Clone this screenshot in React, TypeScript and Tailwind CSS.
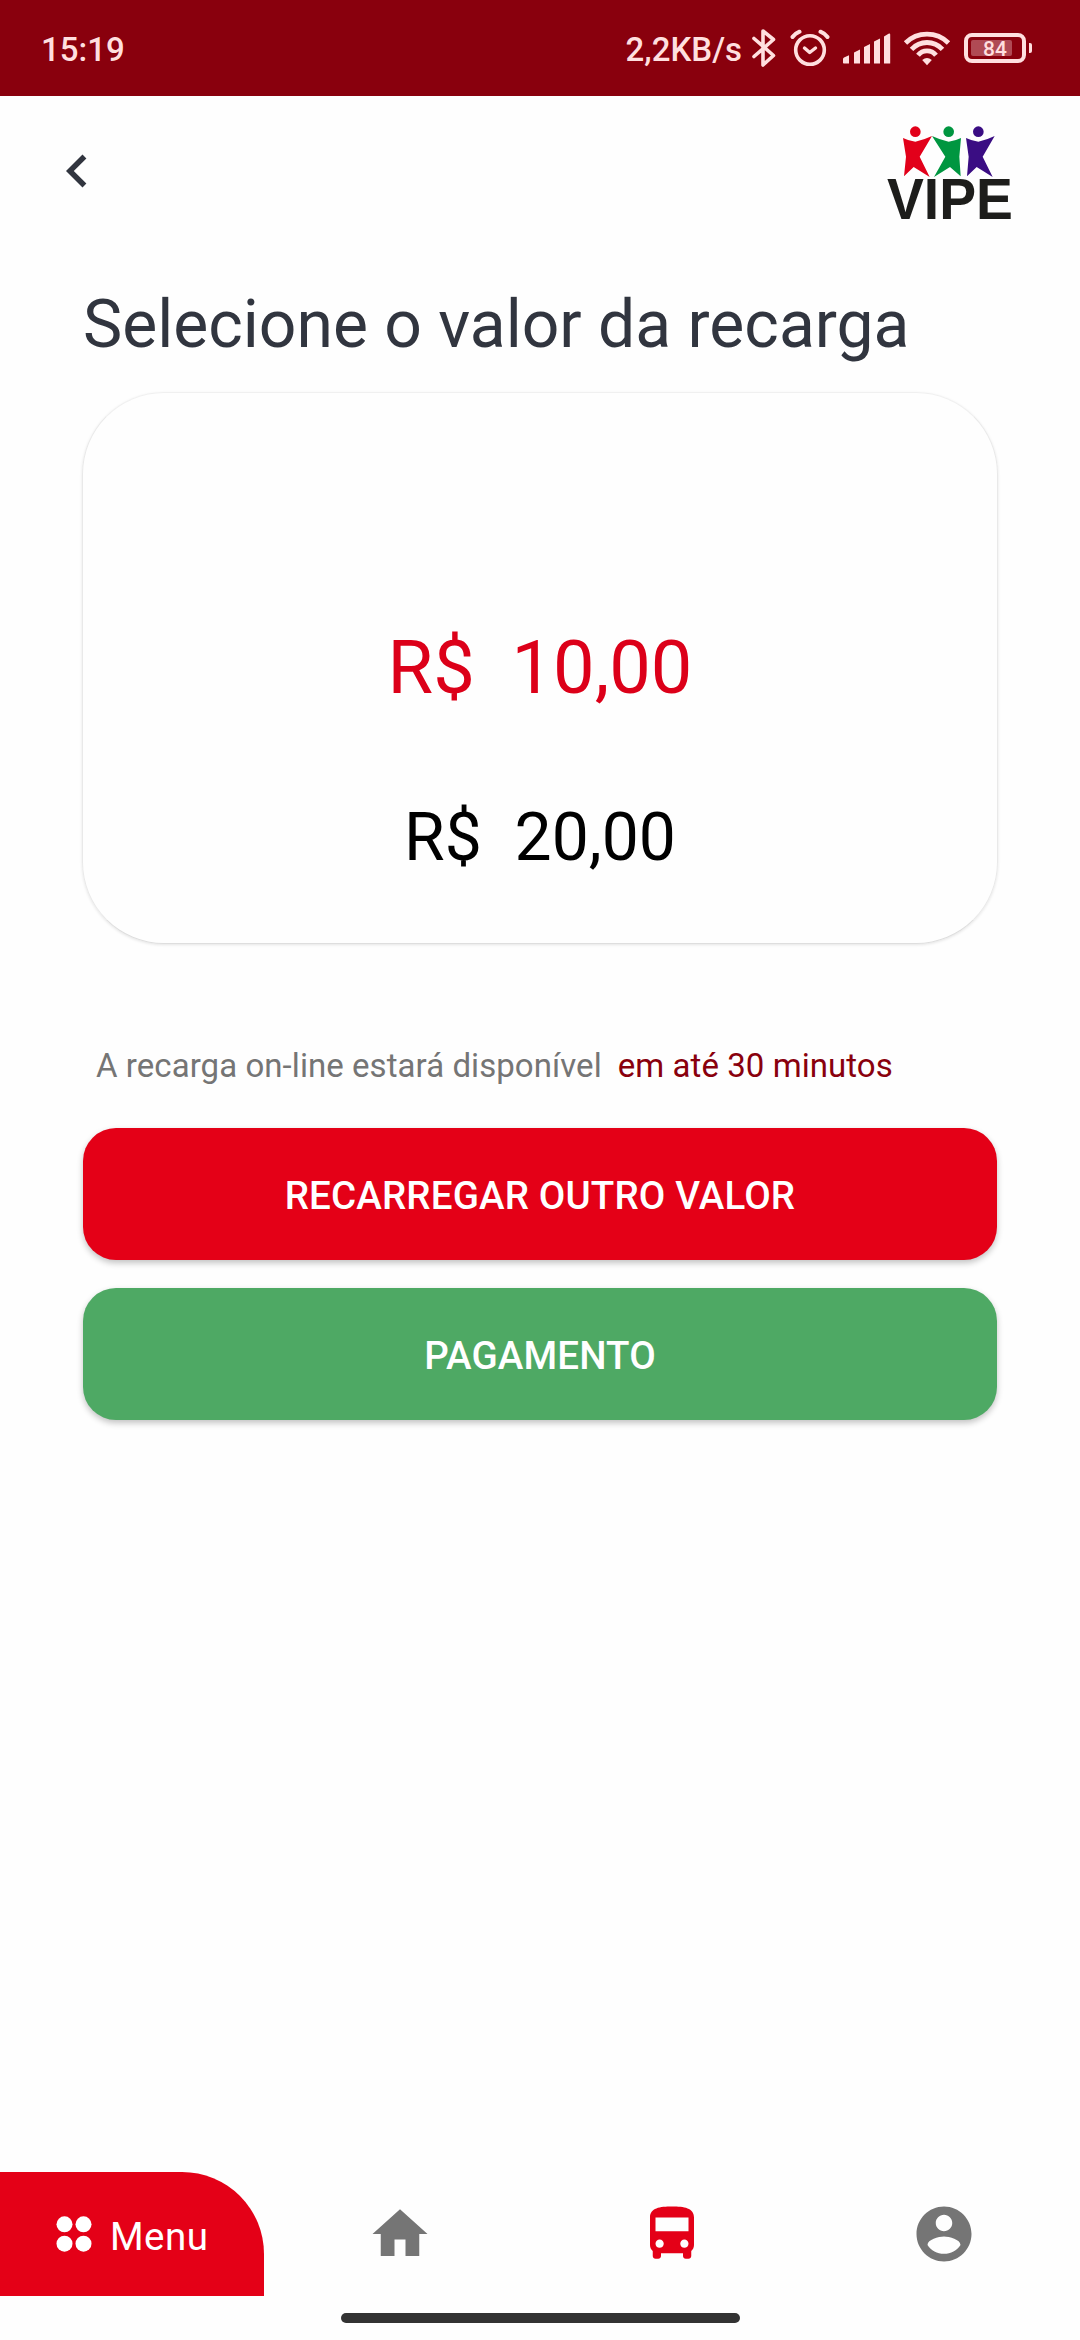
import { MdChevronLeft, MdDirectionsBus } from "react-icons/md";

const values = [
  { label: "10,00", selected: true },
  { label: "20,00", selected: false },
];

function StatusBar() {
  return (
    <div className="flex h-24 items-center bg-[#89000d] pl-[41px] pr-[48px] text-[33px] font-medium leading-none text-[#ffdfdf]">
      <span className="pt-[2px]">15:19</span>
      <div className="ml-auto flex items-center">
        <span className="pt-[2px]">2,2KB/s</span>
        {/* Bluetooth */}
        <svg className="ml-[9px]" width="26" height="40" viewBox="0 0 26 40" fill="none" stroke="currentColor" strokeWidth="3.6" strokeLinecap="round" strokeLinejoin="round">
          <path d="M3 10.5L22.5 27.5L12 37V3L22.5 11.5L3 28.5" />
        </svg>
        {/* Alarm */}
        <svg className="ml-[13px]" width="40" height="38" viewBox="0 0 40 38" fill="none" stroke="currentColor" strokeLinecap="round" strokeLinejoin="round">
          <circle cx="20" cy="21" r="14.3" strokeWidth="3.6" />
          <path d="M14.5 19L19.7 23.5L25.5 19" strokeWidth="3.4" />
          <path d="M2.5 8Q5 4.5 9.5 2.7M30.5 2.7Q35 4.5 37.5 8" strokeWidth="4" />
        </svg>
        {/* Signal */}
        <svg className="ml-[12px]" width="50" height="32" viewBox="0 0 50 32" fill="currentColor">
          <path d="M1 27q0-1 1-1.5l5-2.3v8.3H1.8q-.8 0-.8-.8zM12 20.5l6-3v14h-6zM22 15l6-3v19.5h-6zM32 9.5l6-3v25h-6zM42 4.5l4.5-2.7q1.7-.8 1.7.8v28.9H42z" />
        </svg>
        {/* Wi-Fi */}
        <svg className="ml-[11px]" width="48" height="36" viewBox="0 0 48 36" fill="none" stroke="currentColor" strokeWidth="4.8">
          <path d="M2.5 13Q11.500 4.200 24 4.200T45.500 13" />
          <path d="M8.500 19.300Q15 12.500 24 12.500T39.500 19.300" />
          <path d="M15 25.200Q18.500 20.800 24 20.800T33 25.200" />
          <path d="M19.200 30Q24 26.200 28.800 30L24 35.200z" fill="currentColor" stroke="none" />
        </svg>
        {/* Battery */}
        <div className="ml-[13px] flex items-center gap-[3px]">
          <div className="relative flex h-[30px] w-[62px] items-center justify-center rounded-[8px] border-4 border-[#ffdfdf]">
            <div className="absolute left-[3px] top-[3px] h-4 w-[41px] rounded-[2px] bg-[#b04a54]" />
            <span className="relative pt-[2px] text-[21px]">84</span>
          </div>
          <div className="h-[10px] w-[3px] rounded-r-[2px] bg-[#ffdfdf]" />
        </div>
      </div>
    </div>
  );
}

function Logo() {
  return (
    <svg className="mt-[30px]" width="130" height="106" viewBox="74 78 390 318">
      <g fill="#e2001a">
        <circle cx="165" cy="95" r="16" />
        <path d="M128 114Q146 123 165 125Q190 120 215 108L178 170L208 231L160 201L131 229L137 170z" />
      </g>
      <g fill="#009640">
        <circle cx="265" cy="95" r="16" />
        <path d="M215 108Q240 120 265 125Q284 123 302 114L297 170L301 229L269 201L221 231L255 170z" />
      </g>
      <g fill="#3a0d83">
        <circle cx="354" cy="95" r="16" />
        <path d="M317 114Q336 123 354 125Q379 120 403 108L367 170L397 231L349 201L320 229L325 170z" />
      </g>
      <text x="80" y="357" fontFamily="Liberation Sans, sans-serif" fontWeight="700" fontSize="170" textLength="378" lengthAdjust="spacingAndGlyphs" fill="#1d1d1b">
        VIPE
      </text>
    </svg>
  );
}

function BottomNav() {
  return (
    <nav className="flex h-[124px]">
      <button className="flex w-[264px] items-center rounded-tr-[82px] bg-[#e40017] pl-[56px] text-white">
        <svg width="36" height="36" viewBox="0 0 36 36" fill="currentColor">
          <circle cx="8.5" cy="8.3" r="8" />
          <circle cx="27.5" cy="8.3" r="8" />
          <circle cx="8.5" cy="27.7" r="8" />
          <circle cx="27.5" cy="27.7" r="8" />
        </svg>
        <span className="pl-[18px] pt-[6px] text-[38.5px] leading-none tracking-[0.5px]">Menu</span>
      </button>
      <div className="grid flex-1 grid-cols-3 place-items-center text-[#757575]">
        <svg width="66" height="66" viewBox="0 0 24 24" fill="currentColor">
          <path d="M10 20v-6h4v6h5v-8h3L12 3 2 12h3v8z" />
        </svg>
        <MdDirectionsBus className="size-[66px] text-[#e40017]" />
        <svg width="66" height="66" viewBox="0 0 24 24" fill="currentColor">
          <path d="M12 2C6.48 2 2 6.48 2 12s4.48 10 10 10 10-4.48 10-10S17.52 2 12 2zm0 3c1.66 0 3 1.34 3 3s-1.34 3-3 3-3-1.34-3-3 1.34-3 3-3zm0 14.2c-2.5 0-4.71-1.28-6-3.22.03-1.99 4-3.08 6-3.08 1.99 0 5.97 1.09 6 3.08-1.29 1.94-3.5 3.22-6 3.22z" />
        </svg>
      </div>
    </nav>
  );
}

export default function App() {
  return (
    <div className="flex h-[2340px] w-[1080px] flex-col bg-[#fefefe] font-[Roboto,sans-serif]">
      <StatusBar />

      <header className="flex h-[150px] items-start justify-between pl-[44px] pr-[65px]">
        <MdChevronLeft className="mt-[42px] size-[66px] text-[#31353f]" />
        <Logo />
      </header>

      <main className="flex flex-1 flex-col px-[83px]">
        <h1 className="mt-[39px] text-[66px] leading-[80px] text-[#31353f]">
          Selecione o valor da recarga
        </h1>

        {/* Value picker */}
        <div className="-mx-px mt-[27px] h-[552px] rounded-[82px] border border-[#e9e9e9] border-t-[#f0f0f0] border-b-[#dedede] pt-[190px] shadow-[0_1px_3px_rgba(0,0,0,0.1)]">
          {values.map((value) =>
            value.selected ? (
              <div key={value.label} className="whitespace-pre text-center text-[74px] leading-[170px] text-[#dc0019]">
                {"R$  " + value.label}
              </div>
            ) : (
              <div key={value.label} className="whitespace-pre text-center text-[66px] leading-[170px] text-black">
                {"R$  " + value.label}
              </div>
            ),
          )}
        </div>

        <p className="mt-[102px] flex gap-[16px] pl-[13px] text-[33px] leading-[40px] tracking-[0.06px] text-[#757575]">
          <span>A recarga on-line estará disponível</span>
          <span className="text-[#89000d]">em até 30 minutos</span>
        </p>

        <div className="mt-[42px] flex flex-col gap-[28px] text-[38.5px] font-medium leading-none tracking-[0.15px] text-white">
          <button className="h-[132px] rounded-[33px] bg-[#e40017] pt-[5px] shadow-[0_3px_6px_rgba(0,0,0,0.24)]">
            RECARREGAR OUTRO VALOR
          </button>
          <button className="h-[132px] rounded-[33px] bg-[#4ea964] pt-[5px] shadow-[0_3px_6px_rgba(0,0,0,0.24)]">
            PAGAMENTO
          </button>
        </div>
      </main>

      <BottomNav />

      {/* Gesture bar */}
      <div className="flex h-11 justify-center pt-[17px]">
        <div className="h-[10px] w-[399px] rounded-full bg-[#333333]" />
      </div>
    </div>
  );
}
